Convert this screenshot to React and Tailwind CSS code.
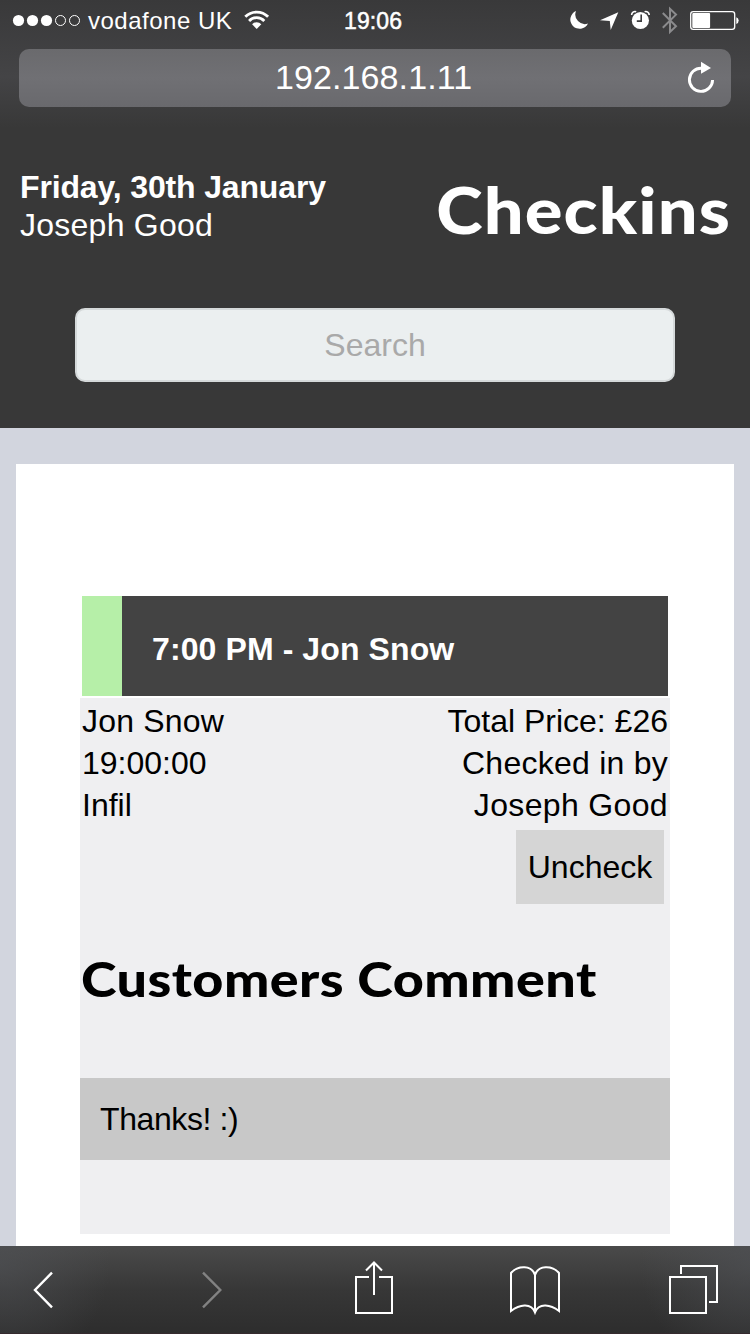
import React from "react";

function StatusBar() {
  return (
    <div className="flex h-[40px] shrink-0 items-center text-[24px] leading-[40px]">
      <svg className="ml-[12px] shrink-0" width="70" height="14" viewBox="0 0 70 14" fill="white">
        <circle cx="6.5" cy="7.5" r="5.6" />
        <circle cx="20.5" cy="7.5" r="5.6" />
        <circle cx="34.5" cy="7.5" r="5.6" />
        <circle cx="48.5" cy="7.5" r="5" fill="none" stroke="white" />
        <circle cx="62.5" cy="7.5" r="5" fill="none" stroke="white" />
      </svg>
      <span className="ml-[6px] mt-[2px] w-[144px] whitespace-nowrap tracking-[0.5px]">vodafone UK</span>
      <svg className="ml-[12px] shrink-0" width="26" height="20" viewBox="0 0 26 20" fill="none" stroke="white" strokeWidth="2.8">
        <path d="M1.3 6.8a16 16 0 0 1 22.8 0" />
        <path d="M5.1 10.9a10.6 10.6 0 0 1 15.2 0" />
        <path d="M12.700 18.9l-4.6-4.7a6.5 6.5 0 0 1 9.2 0z" fill="white" stroke="none" />
      </svg>
      <span className="ml-[74px] mt-[2px] w-[60px] whitespace-nowrap text-[23px] tracking-[0.1px] [-webkit-text-stroke:0.5px_white]">19:06</span>
      <svg className="ml-[165px] shrink-0" width="172" height="30" viewBox="569 5 172 30">
        <path d="M576 11a9.3 9.3 0 1 0 12 12.600a9.6 9.6 0 0 1-12-12.600z" fill="white" />
        <path d="M618.3 12.2L600 20.2l9.8.9.9 9z" fill="white" />
        <circle cx="640.4" cy="20.5" r="8.6" fill="white" />
        <path d="M631.6 15a3.4 3.4 0 0 1 4.6-3.2M649.2 15a3.4 3.4 0 0 0-4.6-3.2" fill="none" stroke="white" strokeWidth="1.6" />
        <path d="M641.2 14.5v6.6h-4.4" fill="none" stroke="#3b3b3d" strokeWidth="1.6" />
        <path d="M662.8 13l13.2 13.2-6 5.8V8.8l6 5.8-13.2 13.2" fill="none" stroke="#8b8b8d" strokeWidth="2" />
        <rect x="690.7" y="11.7" width="44" height="17.6" rx="2.6" fill="none" stroke="white" strokeWidth="1.3" />
        <rect x="692.3" y="13" width="17.8" height="15" rx="1" fill="white" />
        <path d="M736.3 17.2a3.1 3.5 0 0 1 0 6.8z" fill="white" />
      </svg>
    </div>
  );
}

function AddressBar() {
  return (
    <div className="mx-[19px] mt-[9px] flex h-[58px] shrink-0 items-center rounded-[10px] bg-linear-to-b from-[#6a6a6d] via-[#707074] to-[#69696d]">
      <span className="-mt-[2px] ml-[256px] w-[208px] whitespace-nowrap text-[34px] leading-[58px] tracking-[0.1px]">192.168.1.11</span>
      <svg className="-mt-[2px] ml-[203px] shrink-0" width="30" height="34" viewBox="686 60 30 34">
        <path d="M701.5 68.2A11.6 11.6 0 1 0 712.6 80" fill="none" stroke="white" strokeWidth="2.9" />
        <path d="M701 61.8v12l10-5.8z" fill="white" />
      </svg>
    </div>
  );
}

function Toolbar() {
  return (
    <nav className="flex h-[88px] shrink-0 items-center border-b border-[#352a2e] bg-[radial-gradient(ellipse_110px_110px_at_0%_20%,#50525699,#50525600),radial-gradient(ellipse_110px_110px_at_100%_20%,#50525699,#50525600),linear-gradient(#4a4a4a,#373737_50%,#2d2d2d)]">
      <svg className="ml-[30px]" width="26" height="40" viewBox="30 1270 26 40" fill="none" stroke="white" strokeWidth="2.4">
        <path d="M52 1272.7L35 1290l17 17.3" />
      </svg>
      <svg className="ml-[142px]" width="30" height="40" viewBox="198 1270 30 40" fill="none" stroke="#828282" strokeWidth="2.4">
        <path d="M203 1272.7l17.3 17.3-17.3 17.3" />
      </svg>
      <svg className="ml-[124px]" width="46" height="58" viewBox="352 1261 46 58" fill="none" stroke="white" strokeWidth="2">
        <path d="M369 1277h-13v36h36v-36h-13M374 1295v-32M366 1270.5l8-8 8 8" />
      </svg>
      <svg className="ml-[108px]" width="58" height="58" viewBox="506 1261 58 58" fill="none" stroke="white" strokeWidth="2">
        <path d="M535 1312.5V1275c-3-10-17-10-24-2v38c8-6 20-9 24 1.5c4-10.5 16-7.5 24-1.5v-38c-7-8-21-8-24 2" />
      </svg>
      <svg className="ml-[102px]" width="58" height="58" viewBox="666 1261 58 58" fill="none" stroke="white" strokeWidth="2">
        <rect x="670" y="1277" width="36" height="36" />
        <path d="M681 1274v-8h36v36h-8" />
      </svg>
    </nav>
  );
}

export default function App() {
  return (
    <div className="flex h-[1334px] w-[750px] flex-col overflow-hidden bg-[#d2d5de] font-['Liberation_Sans',Arial,sans-serif] text-[32px] text-black">
      <div className="flex h-[128px] shrink-0 flex-col bg-linear-to-b from-[#39393a] via-[#444446] via-60% to-[#383838] text-white">
        <StatusBar />
        <AddressBar />
      </div>

      <header className="flex h-[300px] shrink-0 flex-col bg-[#383838] text-white">
        <div className="flex h-[180px] justify-between pl-[20px] pr-[19px]">
          <div className="pt-[40px] leading-[38px]">
            <div className="whitespace-nowrap font-bold tracking-[-0.15px]">Friday, 30th January</div>
            <div className="whitespace-nowrap tracking-[0.25px]">Joseph Good</div>
          </div>
          <h1 className="origin-right scale-x-[1.1] whitespace-nowrap pt-[42px] font-['Lato',sans-serif] text-[64px] font-black leading-[80px] tracking-[1px]">Checkins</h1>
        </div>
        <input
          className="mx-[75px] h-[74px] rounded-[10px] border-2 border-[#d5d9da] bg-[#ebeff0] text-center text-[32px] placeholder:text-[#a9a9a9]"
          placeholder="Search"
        />
      </header>

      <main className="mx-[16px] mt-[36px] flex min-h-0 flex-1 flex-col bg-white px-[64px] pt-[132px]">
        <div className="mx-[2px] flex h-[100px] shrink-0 items-center border-l-[40px] border-[#b6efa8] bg-[#434343] pl-[30px] pt-[6px] font-bold tracking-[0.1px] text-white">
          7:00 PM - Jon Snow
        </div>
        <section className="mt-[2px] flex h-[536px] shrink-0 flex-col bg-[#efeff1]">
          <div className="flex justify-between px-[2px] pt-[2px] leading-[42px]">
            <div>
              <p className="tracking-[0.2px]">Jon Snow</p>
              <p>19:00:00</p>
              <p>Infil</p>
            </div>
            <div className="text-right">
              <p>Total Price: £26</p>
              <p className="tracking-[0.25px]">Checked in by</p>
              <p className="tracking-[0.35px]">Joseph Good</p>
            </div>
          </div>
          <button className="mr-[6px] mt-[4px] h-[74px] w-[148px] self-end bg-[#d5d5d5]">Uncheck</button>
          <h2 className="ml-px mt-[45px] origin-left scale-x-[1.122] self-start whitespace-nowrap font-['Lato',sans-serif] text-[48px] font-black leading-[60px] tracking-[0.4px]">Customers Comment</h2>
          <div className="mt-[69px] flex h-[82px] shrink-0 items-center bg-[#c8c8c8] pl-[20px] tracking-[-0.4px]">Thanks! :)</div>
        </section>
      </main>

      <Toolbar />
    </div>
  );
}
